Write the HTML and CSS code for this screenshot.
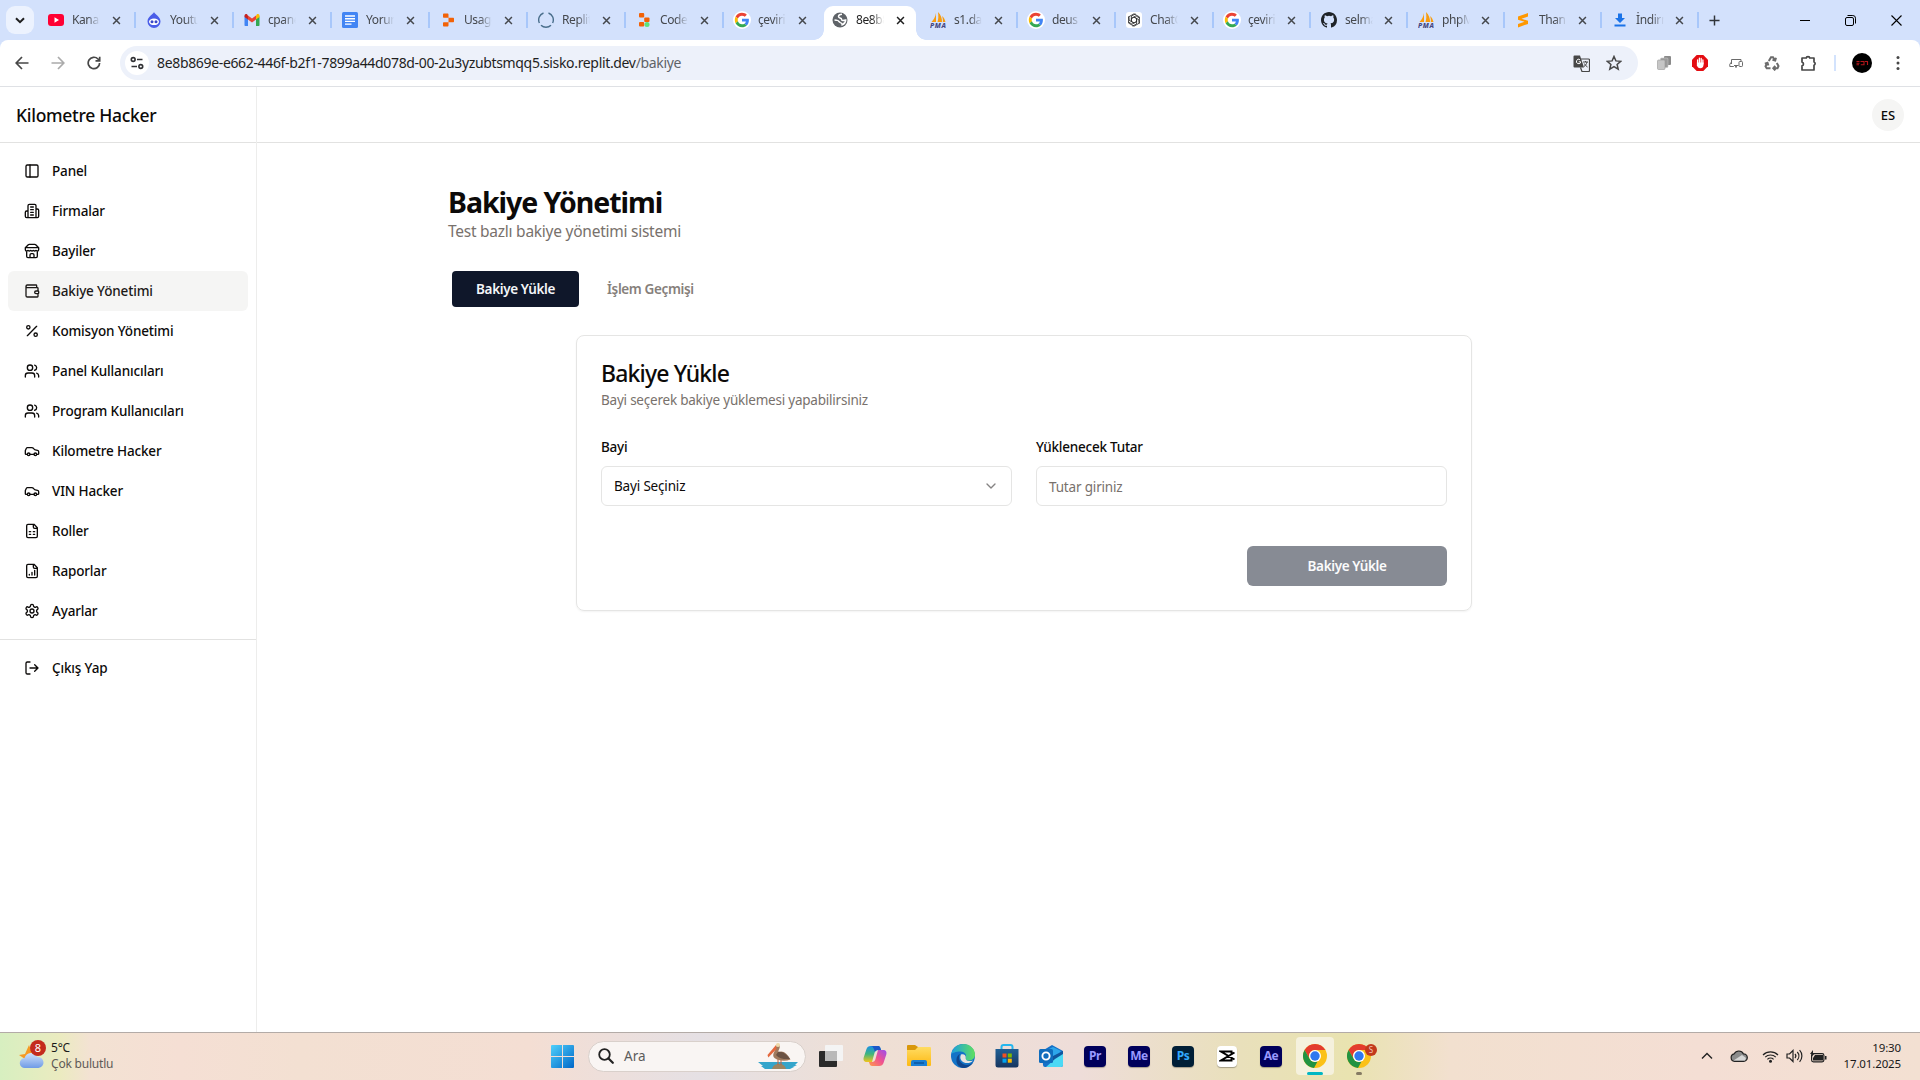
FILE: index.html
```html
<!DOCTYPE html>
<html lang="tr">
<head>
<meta charset="utf-8">
<title>Bakiye Yönetimi</title>
<link rel="stylesheet" href="styles.css">
</head>
<body>
<svg class="defs" width="0" height="0" aria-hidden="true">
  <defs>
    <linearGradient id="g-win" x1="0" y1="0" x2="1" y2="1"><stop offset="0" stop-color="#4fd0fb"/><stop offset="1" stop-color="#0067c8"/></linearGradient>
    <linearGradient id="g-edge" x1="0" y1="0" x2="1" y2="0"><stop offset="0" stop-color="#1d9fdf"/><stop offset="1" stop-color="#5fe05e"/></linearGradient>
    <linearGradient id="g-folder" x1="0" y1="0" x2="0" y2="1"><stop offset="0" stop-color="#ffdc63"/><stop offset="1" stop-color="#fdb913"/></linearGradient>
    <linearGradient id="g-cop1" x1="0" y1="0" x2="0" y2="1"><stop offset="0" stop-color="#1a8fe8"/><stop offset=".5" stop-color="#3fb57e"/><stop offset="1" stop-color="#f2c51b"/></linearGradient>
    <linearGradient id="g-cop2" x1="1" y1="0" x2="0" y2="1"><stop offset="0" stop-color="#9a4df0"/><stop offset=".5" stop-color="#f0528f"/><stop offset="1" stop-color="#ff9b4a"/></linearGradient>
    <linearGradient id="g-cloud" x1="0" y1="0" x2="0" y2="1"><stop offset="0" stop-color="#cfe2fb"/><stop offset="1" stop-color="#6f9be6"/></linearGradient>
    <linearGradient id="g-store" x1="0" y1="0" x2="0" y2="1"><stop offset="0" stop-color="#1f5f95"/><stop offset="1" stop-color="#17355f"/></linearGradient>
    <symbol id="google" viewBox="0 0 20 20">
      <circle cx="10" cy="10" r="10" fill="#fff"/>
      <g transform="translate(2 2) scale(.3333)">
        <path fill="#EA4335" d="M24 9.500c3.540 0 6.710 1.220 9.210 3.600l6.850-6.850C35.900 2.380 30.470 0 24 0 14.620 0 6.510 5.380 2.560 13.220l7.980 6.190C12.430 13.720 17.740 9.500 24 9.500z"/>
        <path fill="#4285F4" d="M46.980 24.550c0-1.570-.15-3.090-.38-4.550H24v9.020h12.940c-.58 2.960-2.260 5.480-4.780 7.180l7.730 6c4.510-4.180 7.090-10.360 7.090-17.650z"/>
        <path fill="#FBBC05" d="M10.530 28.590c-.48-1.450-.76-2.990-.76-4.590s.27-3.140.76-4.590l-7.980-6.190C.92 16.460 0 20.120 0 24c0 3.880.92 7.540 2.560 10.780l7.970-6.190z"/>
        <path fill="#34A853" d="M24 48c6.480 0 11.930-2.130 15.890-5.810l-7.730-6c-2.150 1.450-4.920 2.300-8.160 2.300-6.260 0-11.570-4.220-13.470-9.910l-7.980 6.190C6.510 42.620 14.620 48 24 48z"/>
      </g>
    </symbol>
    <symbol id="pma" viewBox="0 0 16 16">
      <path fill="#f89c0e" d="M6 1v9H1.500C3.500 8 5.500 5 6 1zM8 0c3 3 4 6 4 10H7.500C8.500 7 8.500 4 8 0zM12 4c2 1.500 3 4 3.500 6H12.800c.2-2 0-4-.8-6z"/>
      <text x="8" y="16" text-anchor="middle" font-size="6.800" font-weight="800" font-style="italic" fill="#444780" textLength="16">PMA</text>
    </symbol>
    <symbol id="x" viewBox="0 0 10 10"><path d="M1.200 1.200l7.600 7.600M8.800 1.200L1.200 8.800" fill="none" stroke="currentColor" stroke-width="1.700"/></symbol>
    <symbol id="users" viewBox="0 0 24 24"><path d="M16 21v-2a4 4 0 0 0-4-4H6a4 4 0 0 0-4 4v2"/><circle cx="9" cy="7" r="4"/><path d="M22 21v-2a4 4 0 0 0-3-3.870M16 3.130a4 4 0 0 1 0 7.750"/></symbol>
    <symbol id="car" viewBox="0 0 24 24"><path d="M19 17h2c.6 0 1-.4 1-1v-3c0-.9-.7-1.700-1.500-1.900C18.700 10.600 16 10 16 10s-1.300-1.400-2.200-2.300c-.5-.4-1.100-.7-1.800-.7H5c-.6 0-1.100.4-1.400.9l-1.400 2.900A3.700 3.700 0 0 0 2 12v4c0 .6.4 1 1 1h2"/><circle cx="7" cy="17" r="2"/><path d="M9 17h6"/><circle cx="17" cy="17" r="2"/></symbol>
    <symbol id="chrome" viewBox="0 0 24 24">
      <circle cx="12" cy="12" r="12" fill="#fbc116"/>
      <path fill="#e33b2e" d="M12 0a12 12 0 0 1 10.400 6H12a6 6 0 0 0-5.200 9L1.600 6A12 12 0 0 1 12 0z"/>
      <path fill="#229342" d="M1.600 6l5.200 9a6 6 0 0 0 5.200 3l2.500-.5L11 24A12 12 0 0 1 1.600 6z"/>
      <circle cx="12" cy="12" r="6" fill="#fff"/><circle cx="12" cy="12" r="4.700" fill="#3079ee"/>
    </symbol>
  </defs>
</svg>

<div class="screen">
  <header class="tabstrip">
    <span class="tab-search"><svg width="10" height="7" viewBox="0 0 10 7"><path d="M1 1.200l4 4 4-4" fill="none" stroke="#1f1f1f" stroke-width="2"/></svg></span>
    <div class="tab"><svg class="fav" viewBox="0 0 16 16"><rect y="2" width="16" height="12" rx="3" fill="#ff0033"/><path d="M6.500 5.300v5.400L11 8z" fill="#fff"/></svg><span class="tab-title">Kanal</span><svg class="close"><use href="#x"/></svg></div>
    <div class="tab"><svg class="fav" viewBox="0 0 16 16"><path d="M8 0c.8 2.500 6.500 4.500 6.500 9.500a6.500 6.500 0 0 1-13 0C1.500 4.500 7.200 2.500 8 0z" fill="#4a5de8"/><ellipse cx="8" cy="9.800" rx="5" ry="3.300" fill="#fff"/><circle cx="6" cy="9.800" r="1.500" fill="#3a48c8"/><circle cx="10" cy="9.800" r="1.500" fill="#3a48c8"/></svg><span class="tab-title">Youtu</span><svg class="close"><use href="#x"/></svg></div>
    <div class="tab"><svg class="fav" viewBox="0 0 16 16"><path d="M.5 4.200V13c0 .6.4 1 1 1H4V6.500z" fill="#4285f4"/><path d="M12 14h2.500c.6 0 1-.4 1-1V4.200L12 6.500z" fill="#34a853"/><path d="M12 3.500v4l3.500-2.600V3.800c0-1.500-1.700-2.200-2.700-1.400z" fill="#fbbc04"/><path d="M4 7.500v-4l4 3 4-3v4l-4 3z" fill="#ea4335"/><path d="M.5 3.800v1.100L4 7.500v-4l-.8-1.100C2.200 1.600.5 2.300.5 3.800z" fill="#c5221f"/></svg><span class="tab-title">cpane</span><svg class="close"><use href="#x"/></svg></div>
    <div class="tab"><svg class="fav" viewBox="0 0 16 16"><rect width="16" height="16" rx="1.500" fill="#4285f4"/><path d="M3 4h10M3 6.700h10M3 9.400h10M3 12.100h6.500" stroke="#fff" stroke-width="1.400"/></svg><span class="tab-title">Yorum</span><svg class="close"><use href="#x"/></svg></div>
    <div class="tab"><svg class="fav" viewBox="0 0 16 16"><path fill="#f26207" d="M3 2.500c0-.5.400-1 1-1h3.500c.6 0 1 .5 1 1v3.300H4c-.6 0-1-.4-1-1zM8.500 5.800H13c.6 0 1 .4 1 1v2.400c0 .6-.4 1-1 1H8.500zM3 11.200c0-.6.4-1 1-1h4.500v3.300c0 .5-.4 1-1 1H4c-.6 0-1-.5-1-1z"/></svg><span class="tab-title">Usage</span><svg class="close"><use href="#x"/></svg></div>
    <div class="tab"><svg class="fav" viewBox="0 0 16 16"><g fill="none" stroke="#4a6f8c" stroke-width="1.400"><path d="M10.500 1A7.300 7.300 0 0 1 14.600 11"/><path d="M13 13.200a7.300 7.300 0 0 1-10 0"/><path d="M1.400 11A7.300 7.300 0 0 1 5.500 1"/></g></svg><span class="tab-title">Replit</span><svg class="close"><use href="#x"/></svg></div>
    <div class="tab"><svg class="fav" viewBox="0 0 16 16"><rect x="3" y="1" width="5.200" height="4.600" rx="1" fill="#f26207"/><rect x="8.200" y="5.600" width="5.300" height="4.400" rx="1" fill="#f26207"/><rect x="3" y="10" width="5.200" height="4.600" rx="1" fill="#f26207"/><circle cx="11" cy="12.500" r="2.500" fill="#5ee37c"/></svg><span class="tab-title">Code</span><svg class="close"><use href="#x"/></svg></div>
    <div class="tab no-sep"><svg class="fav g"><use href="#google"/></svg><span class="tab-title">çeviri</span><svg class="close"><use href="#x"/></svg></div>
    <div class="tab active"><svg class="fav" viewBox="0 0 16 16"><circle cx="8" cy="8" r="7.500" fill="#5f6368"/><path d="M10 2.200c-1.500 0-3.500.8-3.500 2.300 0 1.500 1.500 1.200 2.500 1.800.9.600.2 1.600 1.200 2.100 1 .4 2-.2 3.500-.3-.2 2-1.500 3.800-3.500 4.800 0-1.500-.8-2-1.800-2.300-1.500-.5-1.500-1.800-3-2.200-1-.3-2-.4-2.900-.5" fill="none" stroke="#fff" stroke-width="1.500"/></svg><span class="tab-title">8e8b8</span><svg class="close"><use href="#x"/></svg></div>
    <div class="tab"><svg class="fav"><use href="#pma"/></svg><span class="tab-title">s1.da</span><svg class="close"><use href="#x"/></svg></div>
    <div class="tab"><svg class="fav g"><use href="#google"/></svg><span class="tab-title">deus</span><svg class="close"><use href="#x"/></svg></div>
    <div class="tab"><svg class="fav" viewBox="0 0 16 16"><rect width="16" height="16" rx="3" fill="#fff"/><g fill="none" stroke="#222" stroke-width=".8"><path d="M8 1.800l5.400 3.100v6.200L8 14.200l-5.400-3.100V4.900z" stroke-linejoin="round"/><path d="M8 5l2.600 1.500v3L8 11 5.400 9.500v-3zM5.400 9.500V4L9.500 1.900M5.400 6.500L10 3.800l3.600 2.300M8 5l4.800 2.700.4 4M10.600 6.500V12l-4.100 2.100M10.600 9.500L6 12.200 2.400 9.900M8 11L3.200 8.300l-.4-4"/></g></svg><span class="tab-title">ChatG</span><svg class="close"><use href="#x"/></svg></div>
    <div class="tab slim"><svg class="fav g"><use href="#google"/></svg><span class="tab-title">çeviri</span><svg class="close"><use href="#x"/></svg></div>
    <div class="tab slim"><svg class="fav" viewBox="0 0 16 16"><path fill="#1f2328" d="M8 0C3.580 0 0 3.580 0 8c0 3.540 2.290 6.530 5.470 7.590.4.070.55-.17.55-.38 0-.19-.01-.82-.01-1.490-2.010.37-2.530-.49-2.690-.94-.09-.23-.48-.94-.82-1.130-.28-.15-.68-.52-.01-.53.63-.01 1.080.58 1.230.82.72 1.210 1.870.87 2.330.66.07-.52.28-.87.51-1.070-1.780-.2-3.640-.89-3.640-3.950 0-.87.31-1.590.82-2.150-.08-.2-.36-1.020.08-2.120 0 0 .67-.21 2.200.82a7.640 7.640 0 0 1 4 0c1.530-1.040 2.200-.82 2.200-.82.44 1.100.16 1.920.08 2.120.51.56.82 1.270.82 2.150 0 3.070-1.870 3.750-3.650 3.950.29.25.54.73.54 1.480 0 1.070-.01 1.930-.01 2.200 0 .21.15.46.55.38A8 8 0 0 0 16 8c0-4.420-3.580-8-8-8z"/></svg><span class="tab-title">selma</span><svg class="close"><use href="#x"/></svg></div>
    <div class="tab slim"><svg class="fav"><use href="#pma"/></svg><span class="tab-title">phpM</span><svg class="close"><use href="#x"/></svg></div>
    <div class="tab slim"><svg class="fav" viewBox="0 0 16 16"><path fill="#ff9800" d="M3 4.500L13 1v3.600L6.500 6.800 13 8.800v3.100L3 15.500v-3.600l6.500-2.200L3 7.700z"/></svg><span class="tab-title">Than</span><svg class="close"><use href="#x"/></svg></div>
    <div class="tab slim"><svg class="fav" viewBox="0 0 16 16"><path fill="#1a73e8" d="M6 1.500h4V6h3l-5 5-5-5h3zM2.500 12.500h11v2h-11z"/></svg><span class="tab-title">İndirm</span><svg class="close"><use href="#x"/></svg></div>
    <svg class="new-tab" viewBox="0 0 12 12"><path d="M6 .5v11M.5 6h11" stroke="#30343a" stroke-width="1.600"/></svg>
    <div class="window-buttons">
      <svg width="10" height="10" viewBox="0 0 10 10"><path d="M0 5.500h10" stroke="#000"/></svg>
      <svg width="11" height="11" viewBox="0 0 11 11"><g fill="none" stroke="#000"><rect x=".5" y="2.500" width="8" height="8" rx="1.500"/><path d="M2.500.5h5.300a2.700 2.700 0 0 1 2.700 2.700v5.300"/></g></svg>
      <svg width="11" height="11" viewBox="0 0 11 11"><path d="M.5.5l10 10M10.500.5l-10 10" stroke="#000" stroke-width="1.100"/></svg>
    </div>
  </header>

  <div class="toolbar-wrap">
  <div class="toolbar">
    <div class="nav">
      <svg viewBox="0 0 14 14"><path d="M7 1L1.200 7 7 13M1.200 7H13.500" fill="none" stroke="#474747" stroke-width="1.700"/></svg>
      <svg viewBox="0 0 14 14"><path d="M7 1l5.800 6L7 13M12.800 7H.5" fill="none" stroke="#ababab" stroke-width="1.700"/></svg>
      <svg viewBox="0 0 14 14"><path d="M12.600 7A5.700 5.700 0 1 1 11 3l1.500 1.500M12.700.7v4.200H8.500" fill="none" stroke="#474747" stroke-width="1.700"/></svg>
    </div>
    <div class="omnibox">
      <span class="site-info"><svg width="14" height="14" viewBox="0 0 14 14"><g fill="none" stroke="#303134" stroke-width="1.600"><circle cx="3.200" cy="3.500" r="1.900"/><path d="M7 3.500h5.500M1.500 10.500H7"/><circle cx="10.800" cy="10.500" r="1.900"/></g></svg></span>
      <span class="url"><span class="host">8e8b869e-e662-446f-b2f1-7899a44d078d-00-2u3yzubtsmqq5.sisko.replit.dev</span><span class="path">/bakiye</span></span>
      <svg class="translate" width="17" height="17" viewBox="0 0 17 17"><path d="M1.500.5H7L11 12.500H1.500a1 1 0 0 1-1-1v-10a1 1 0 0 1 1-1z" fill="#474747"/><path d="M8 4h7.500a1 1 0 0 1 1 1v10.500a1 1 0 0 1-1 1H9l-1.500-4" fill="none" stroke="#474747" stroke-width="1.200"/><path d="M10 7h5M12.500 6v1M14 7c-.5 2-1.500 3.500-3 4.500M11.300 8.500c.7 1.500 1.700 2.500 3.200 3.500" fill="none" stroke="#474747"/><path d="M7 4.800a2.200 2.200 0 1 0 .8 2H5.700" fill="none" stroke="#fff" stroke-width="1"/></svg>
      <svg class="star" width="16" height="16" viewBox="0 0 16 16"><path d="M8 1.500l1.900 4.400 4.800.4-3.600 3.200 1.100 4.700L8 11.700l-4.200 2.500 1.100-4.700L1.300 6.300l4.800-.4z" fill="none" stroke="#474747" stroke-width="1.500"/></svg>
    </div>
    <div class="extensions">
      <svg viewBox="0 0 16 16"><rect x="8" y="1" width="7" height="9" rx="1" fill="#8a8a8a"/><rect x="4.500" y="3" width="7.500" height="9.500" rx="1" fill="#9c9c9c" stroke="#c4c4c4" stroke-width=".6"/><rect x="1.500" y="5" width="7.500" height="9.500" rx="1" fill="#c6c6c6" stroke="#999" stroke-width=".6"/></svg>
      <svg viewBox="0 0 16 16"><path d="M4.700 0h6.600L16 4.700v6.600L11.300 16H4.700L0 11.300V4.700z" fill="#e40d12"/><path d="M5.600 8.500V4.800M7.400 8V3.200M9.200 8V3.500M10.900 9V5" stroke="#fff" stroke-width="1.300" stroke-linecap="round"/><path d="M4.900 7.500h6.700l-.2 3c-.2 1.700-1.200 2.700-3 2.700-2 0-3-1-3.500-3z" fill="#fff"/></svg>
      <svg viewBox="0 0 16 16"><path d="M3.500 9V4.500h9.500V6M1.800 11.500V9.200L3.500 7M1.800 11.500h4M6 10.500h4.500" fill="none" stroke="#6a6a6a"/><rect x="11" y="6.500" width="3.500" height="5" rx=".8" fill="#fff" stroke="#6a6a6a"/><circle cx="8" cy="11.800" r="1" fill="#6a6a6a"/></svg>
      <svg viewBox="0 0 16 16"><g fill="none" stroke="#6c6c6c" stroke-width="2"><path d="M4.800 6L7 2.200h2L10.700 5M8.500 4.800l2.700.8.800-2.800"/><path d="M12.800 8l1.700 3-1 2.200H10M11.300 11l-2 2.200 2 2.200"/><path d="M6.500 13.200H2.700l-1.200-2L3.300 8.200M.8 8.600l2.700-.8.900 2.700"/></g></svg>
      <svg viewBox="0 0 16 16"><path d="M2 3h4.300a1.700 1.400 0 0 1 3.400 0H14v4a1.700 1.700 0 0 1 0 3.200V15H2v-4.200a1.900 1.900 0 0 0 0-3.700z" fill="none" stroke="#474747" stroke-width="1.700" stroke-linejoin="round"/></svg>
      <i class="bar"></i>
      <svg class="profile" viewBox="0 0 20 20"><circle cx="10" cy="10" r="10" fill="#000"/><path d="M4.500 8.500h3M4.500 10.200h3M4.500 11.800h2.500M8.500 8.500h3.500v3.300H8.800M13 8.500h2.500v3.500" stroke="#b4161b" stroke-width="1.100" fill="none"/></svg>
      <svg class="dots" viewBox="0 0 4 16"><circle cx="2" cy="2.500" r="1.500"/><circle cx="2" cy="8" r="1.500"/><circle cx="2" cy="13.500" r="1.500"/></svg>
    </div>
  </div>
  </div>

  <div class="app">
    <aside class="sidebar">
      <div class="brand">Kilometre Hacker</div>
      <nav class="menu">
        <a class="item"><svg viewBox="0 0 24 24"><rect x="3" y="3" width="18" height="18" rx="2"/><path d="M9 3v18"/></svg><span>Panel</span></a>
        <a class="item"><svg viewBox="0 0 24 24"><path d="M6 22V4a2 2 0 0 1 2-2h8a2 2 0 0 1 2 2v18ZM6 12H4a2 2 0 0 0-2 2v6a2 2 0 0 0 2 2h2M18 9h2a2 2 0 0 1 2 2v9a2 2 0 0 1-2 2h-2M10 6h4M10 10h4M10 14h4M10 18h4"/></svg><span>Firmalar</span></a>
        <a class="item"><svg viewBox="0 0 24 24"><path d="m2 7 4.410-4.410A2 2 0 0 1 7.830 2h8.340a2 2 0 0 1 1.420.59L22 7M4 12v8a2 2 0 0 0 2 2h12a2 2 0 0 0 2-2v-8M15 22v-4a2 2 0 0 0-2-2h-2a2 2 0 0 0-2 2v4M2 7h20M22 7v3a2 2 0 0 1-2 2a2.700 2.700 0 0 1-1.590-.63.7.7 0 0 0-.82 0A2.700 2.700 0 0 1 16 12a2.700 2.700 0 0 1-1.590-.63.7.7 0 0 0-.82 0A2.700 2.700 0 0 1 12 12a2.700 2.700 0 0 1-1.590-.63.7.7 0 0 0-.82 0A2.700 2.700 0 0 1 8 12a2.700 2.700 0 0 1-1.590-.63.7.7 0 0 0-.82 0A2.700 2.700 0 0 1 4 12a2 2 0 0 1-2-2V7"/></svg><span>Bayiler</span></a>
        <a class="item selected"><svg viewBox="0 0 24 24"><path d="M19 7V4a1 1 0 0 0-1-1H5a2 2 0 0 0 0 4h15a1 1 0 0 1 1 1v4h-3a2 2 0 0 0 0 4h3a1 1 0 0 0 1-1v-2a1 1 0 0 0-1-1M3 5v14a2 2 0 0 0 2 2h15a1 1 0 0 0 1-1v-4"/></svg><span>Bakiye Yönetimi</span></a>
        <a class="item"><svg viewBox="0 0 24 24"><path d="M19 5L5 19"/><circle cx="6.500" cy="6.500" r="2.500"/><circle cx="17.500" cy="17.500" r="2.500"/></svg><span>Komisyon Yönetimi</span></a>
        <a class="item"><svg><use href="#users"/></svg><span>Panel Kullanıcıları</span></a>
        <a class="item"><svg><use href="#users"/></svg><span>Program Kullanıcıları</span></a>
        <a class="item"><svg><use href="#car"/></svg><span>Kilometre Hacker</span></a>
        <a class="item"><svg><use href="#car"/></svg><span>VIN Hacker</span></a>
        <a class="item"><svg viewBox="0 0 24 24"><path d="M15 2H6a2 2 0 0 0-2 2v16a2 2 0 0 0 2 2h12a2 2 0 0 0 2-2V7ZM14 2v4a2 2 0 0 0 2 2h4M8 13h2M14 13h2M8 17h2M14 17h2"/></svg><span>Roller</span></a>
        <a class="item"><svg viewBox="0 0 24 24"><path d="M15 2H6a2 2 0 0 0-2 2v16a2 2 0 0 0 2 2h12a2 2 0 0 0 2-2V7ZM14 2v4a2 2 0 0 0 2 2h4M8 18v-1M12 18v-4M16 18v-7"/></svg><span>Raporlar</span></a>
        <a class="item"><svg viewBox="0 0 24 24"><path d="M12.220 2h-.44a2 2 0 0 0-2 2v.18a2 2 0 0 1-1 1.730l-.43.25a2 2 0 0 1-2 0l-.15-.08a2 2 0 0 0-2.730.73l-.22.38a2 2 0 0 0 .73 2.730l.15.1a2 2 0 0 1 1 1.720v.51a2 2 0 0 1-1 1.740l-.15.09a2 2 0 0 0-.73 2.730l.22.38a2 2 0 0 0 2.730.73l.15-.08a2 2 0 0 1 2 0l.43.25a2 2 0 0 1 1 1.730V20a2 2 0 0 0 2 2h.44a2 2 0 0 0 2-2v-.18a2 2 0 0 1 1-1.730l.43-.25a2 2 0 0 1 2 0l.15.08a2 2 0 0 0 2.730-.73l.22-.39a2 2 0 0 0-.73-2.730l-.15-.08a2 2 0 0 1-1-1.740v-.5a2 2 0 0 1 1-1.740l.15-.09a2 2 0 0 0 .73-2.730l-.22-.38a2 2 0 0 0-2.730-.73l-.15.08a2 2 0 0 1-2 0l-.43-.25a2 2 0 0 1-1-1.730V4a2 2 0 0 0-2-2z"/><circle cx="12" cy="12" r="3"/></svg><span>Ayarlar</span></a>
      </nav>
      <div class="menu logout">
        <a class="item"><svg viewBox="0 0 24 24"><path d="M9 21H5a2 2 0 0 1-2-2V5a2 2 0 0 1 2-2h4M16 17l5-5-5-5M21 12H9"/></svg><span>Çıkış Yap</span></a>
      </div>
    </aside>

    <div class="page">
      <div class="topbar"><span class="avatar">ES</span></div>
      <main class="content">
        <h1>Bakiye Yönetimi</h1>
        <p class="subtitle">Test bazlı bakiye yönetimi sistemi</p>
        <div class="tabs">
          <button class="tab-btn on">Bakiye Yükle</button>
          <button class="tab-btn">İşlem Geçmişi</button>
        </div>
        <section class="card">
          <h2>Bakiye Yükle</h2>
          <p class="hint">Bayi seçerek bakiye yüklemesi yapabilirsiniz</p>
          <div class="fields">
            <div class="field">
              <label>Bayi</label>
              <div class="control select"><span>Bayi Seçiniz</span><svg width="16" height="16" viewBox="0 0 24 24"><path d="m6 9 6 6 6-6" fill="none" stroke="#858383" stroke-width="2" stroke-linecap="round" stroke-linejoin="round"/></svg></div>
            </div>
            <div class="field">
              <label>Yüklenecek Tutar</label>
              <div class="control placeholder"><span>Tutar giriniz</span></div>
            </div>
          </div>
          <button class="submit">Bakiye Yükle</button>
        </section>
      </main>
    </div>
  </div>

  <footer class="taskbar">
    <div class="weather">
      <svg width="30" height="34" viewBox="0 0 30 34"><path d="M10 5l2 5 7 3-3 8-10-2-6-4 6-1z" fill="#f59a23"/><path d="M6 28a5 5 0 0 1-.5-10 7 7 0 0 1 13-1A5.500 5.500 0 0 1 19.500 28z" fill="url(#g-cloud)"/><circle cx="19" cy="8" r="8" fill="#c42b1c"/><text x="19" y="12" text-anchor="middle" font-size="11" fill="#fff">8</text></svg>
      <div class="weather-text"><span class="temp">5°C</span><span class="cond">Çok bulutlu</span></div>
    </div>
    <div class="dock">
      <div class="slot start"><svg width="23" height="23" viewBox="0 0 23 23"><path fill="url(#g-win)" d="M1 0h10v11H0V1a1 1 0 0 1 1-1zM12 0h10a1 1 0 0 1 1 1v10H12zM0 12h11v11H1a1 1 0 0 1-1-1zM12 12h11v10a1 1 0 0 1-1 1H12z"/></svg></div>
      <div class="search">
        <svg width="16" height="16" viewBox="0 0 16 16"><circle cx="6.500" cy="6.500" r="5.300" fill="none" stroke="#222" stroke-width="1.800"/><path d="M10.500 10.500l4.300 4.300" stroke="#222" stroke-width="2.200" stroke-linecap="round"/></svg>
        <span>Ara</span>
        <svg class="pelican" width="40" height="27" viewBox="0 0 40 27"><path d="M0 19h40l-3 3h2l-4 2h1l-4 2H7l-4-3h2z" fill="#35a5cb"/><path d="M14 26c1-4 4-5 7-5s6 1 7 5z" fill="#9c8461"/><path d="M20 15v7M23 16v6" stroke="#c8603a" stroke-width="1"/><path d="M19 1c3 0 3.500 3 2 5.500-.8 1.500-1 2.500 0 2.500 4-2 8.500 2 11.500 7.500-5 2-12 1.500-16-1.500-3-3 0-6 1-9z" fill="#a07a5e"/><path d="M20 9c5-1 9 3 12 7-6 .5-11-.5-14-4z" fill="#6b5344"/><path d="M18 2l-8.500 10 .8 2.500L18.500 6z" fill="#e4683e"/><circle cx="20" cy="2" r="2" fill="#efd9a8"/></svg>
      </div>
      <div class="slot"><svg width="24" height="22" viewBox="0 0 24 22"><rect y="6" width="18" height="16" rx="1" fill="#2a2a2a"/><rect x="6" width="18" height="16" rx="1" fill="#f4f4f4"/><path d="M6 6h12v10H6z" fill="#b9b9b9"/></svg></div>
      <div class="slot"><svg width="24" height="22" viewBox="0 0 24 22"><path d="M8 1h7c1 0 2 .7 2.300 1.700L18 5h-3c-2 0-3 1-3.500 3L9 17H4c-3 0-4-2-3.300-4.500L3.500 4C4.200 2 5.500 1 8 1z" fill="url(#g-cop1)"/><path d="M16 21H9c-1 0-2-.7-2.300-1.700L6 17h3c2 0 3-1 3.500-3L15 5h5c3 0 4 2 3.300 4.500L20.500 18c-.7 2-2 3-4.500 3z" fill="url(#g-cop2)"/><path d="M8 1h7c1 0 2 .7 2.300 1.700L18 5h-3c-2 0-2.500 1-3 2-1-3-2-6-4-6z" fill="#1c58c9"/></svg></div>
      <div class="slot"><svg width="24" height="22" viewBox="0 0 24 22"><path d="M0 1a1 1 0 0 1 1-1h7l3 2v4H0z" fill="#d9970b"/><path d="M0 5h8l3-3h12a1 1 0 0 1 1 1v17a1 1 0 0 1-1 1H1a1 1 0 0 1-1-1z" fill="url(#g-folder)"/><path d="M4 21v-4a2 2 0 0 1 2-2h12a2 2 0 0 1 2 2v4z" fill="#1a7fd4"/><path d="M7 18h10" stroke="#0b559f" stroke-width="1.500"/></svg></div>
      <div class="slot"><svg width="24" height="24" viewBox="0 0 24 24"><circle cx="12" cy="12" r="12" fill="#1373c7"/><path d="M.3 10C1.500 4 6.500 0 12.500 0 19 0 24 5 24 10.500c0 4-3 6-6.500 6-3 0-4-1.200-3-2.500 1.500-2.500 0-6.500-5-6.500C5 7.500 1 9 .3 10z" fill="url(#g-edge)"/><path d="M9 10c-2 3-1 8 3 10 3.500 1.700 7.500 1 10-1.500C20 22 16 24 12 24 7 23 5 19 5.500 15 5.800 12.500 7 11 9 10z" fill="#10458d"/><path d="M10 10.500c3-1 5 .8 4.700 3-.7 2.500 1.800 4.500 7.300 3-2 2.500-6 3.300-9 2-3.500-1.500-4.500-5-3-8z" fill="#e8e3df"/></svg></div>
      <div class="slot"><svg width="24" height="24" viewBox="0 0 24 24"><path d="M6.500 6V3a2 2 0 0 1 2-2h7a2 2 0 0 1 2 2v3" fill="none" stroke="#25b6ee" stroke-width="2"/><path d="M.5 5h23v16a2.500 2.500 0 0 1-2.500 2.500H3A2.500 2.500 0 0 1 .5 21z" fill="url(#g-store)"/><path d="M7.500 9.500h4v4h-4z" fill="#f25022"/><path d="M12.800 9.500h4v4h-4z" fill="#7fba00"/><path d="M7.500 14.700h4v4h-4z" fill="#00a4ef"/><path d="M12.800 14.700h4v4h-4z" fill="#ffb900"/></svg></div>
      <div class="slot"><svg width="24" height="22" viewBox="0 0 24 22"><path d="M3 6l10-6 11 6v14a2 2 0 0 1-2 2H6a2 2 0 0 1-2-2z" fill="#1470c8"/><path d="M6 6l8-4 8 4-7 9z" fill="#2da6ea"/><path d="M14 11l10-5v4l-12 9z" fill="#10559c"/><path d="M24 9v11a2 2 0 0 1-2 2H7l9-8z" fill="#4bd9f5"/><rect y="4" width="14" height="14" rx="1.500" fill="#0f6cbd"/><circle cx="7" cy="11" r="3.600" fill="none" stroke="#fff" stroke-width="1.900"/></svg></div>
      <div class="slot"><span class="adobe navy">Pr</span></div>
      <div class="slot"><span class="adobe navy">Me</span></div>
      <div class="slot"><span class="adobe ps">Ps</span></div>
      <div class="slot"><span class="adobe cap"><svg width="16" height="12" viewBox="0 0 16 12"><path d="M15.500 2.500L2 10.500h10.500v-2M15.500 9.500L2 1.500h10.500v2" fill="none" stroke="#000" stroke-width="2"/></svg></span></div>
      <div class="slot"><span class="adobe navy">Ae</span></div>
      <div class="slot current"><svg width="24" height="24"><use href="#chrome"/></svg></div>
      <div class="slot running"><svg width="24" height="24"><use href="#chrome"/></svg><span class="badge">S</span></div>
    </div>
    <div class="tray">
      <svg class="chevron" width="12" height="8" viewBox="0 0 12 8"><path d="M1 6.500l5-5 5 5" fill="none" stroke="#222" stroke-width="1.400"/></svg>
      <svg class="cloud" width="18" height="12" viewBox="0 0 18 12"><path d="M4.500 11.300a3.800 3.800 0 0 1-.3-7.500A5.200 5.200 0 0 1 13.500 3.900a3.700 3.700 0 0 1 .2 7.400z" fill="#8c8c8c" stroke="#222" stroke-width="1.200"/><path d="M3.500 10.500L12 5l4 3-1 2.500z" fill="#d6d6d6"/></svg>
      <svg width="17" height="13" viewBox="0 0 17 13"><g fill="none" stroke="#222" stroke-width="1.200"><path d="M1 5a10.500 10.500 0 0 1 15 0M3.200 7.200a7.500 7.500 0 0 1 10.600 0M5.400 9.400a4.400 4.400 0 0 1 6.200 0"/></g><circle cx="8.500" cy="11.300" r="1.500" fill="#222"/></svg>
      <svg width="17" height="14" viewBox="0 0 17 14"><g fill="none" stroke="#222" stroke-width="1.200"><path d="M1 5h2.500L7 1.500v11L3.500 9H1z"/><path d="M9 5a3 3 0 0 1 0 4M11.300 3a6 6 0 0 1 0 8M13.600 1.200a8.500 8.500 0 0 1 0 11.600"/></g></svg>
      <svg width="17" height="13" viewBox="0 0 17 13"><rect x="1.600" y="3.600" width="12.300" height="8.300" rx="1.800" fill="none" stroke="#222" stroke-width="1.200"/><path d="M5 5h8v5.500H3V8z" fill="#222"/><path d="M15 6h1.500v3.500H15zM3 0v3h2L1.500 7V4H0z" fill="#222"/></svg>
      <div class="clock"><span>19:30</span><span>17.01.2025</span></div>
    </div>
  </footer>
</div>
</body>
</html>
```
FILE: styles.css
```css
* { box-sizing: border-box; margin: 0; padding: 0; }

body {
  font-family: "Noto Sans", "Open Sans", sans-serif;
  color: #0c0a09;
  background: #fff;
}

svg { display: block; flex: none; }
.defs { position: absolute; }

.screen {
  display: flex;
  flex-direction: column;
  width: 1920px;
  height: 1080px;
  overflow: hidden;
}

/* browser tab strip */
.tabstrip {
  display: flex;
  align-items: center;
  height: 40px;
  padding-left: 6px;
  background: #d3e1fc;
}
.tab-search {
  display: grid;
  place-items: center;
  width: 28px;
  height: 28px;
  margin-right: 3px;
  border-radius: 9px;
  background: #ecf2fe;
}
.tab {
  display: flex;
  align-items: center;
  flex: none;
  position: relative;
  width: 98px;
  height: 40px;
  padding-left: 11px;
  color: #45484d;
}
.tab.slim { width: 97px; }
.tab::after {
  content: "";
  position: absolute;
  right: -1px;
  top: 12px;
  width: 2px;
  height: 16px;
  background: #a8c7fa;
}
.tab.no-sep::after { display: none; }
.tab .fav { width: 16px; height: 16px; }
.tab-title {
  width: 28px;
  margin-left: 8px;
  overflow: hidden;
  white-space: nowrap;
  font-size: 12px;
  line-height: 18px;
  letter-spacing: -.4px;
  -webkit-mask-image: linear-gradient(90deg, #000 55%, transparent);
  mask-image: linear-gradient(90deg, #000 55%, transparent);
}
.tab .close { width: 9px; height: 9px; margin-left: 11.500px; }
.tab.slim .close { margin-left: 10.500px; }
.tab.active {
  height: 34px;
  align-self: flex-end;
  width: 92px;
  margin: 0 3px;
  padding: 0 0 6px 8px;
  border-radius: 9px 9px 0 0;
  background: #fff;
  color: #1f1f1f;
}
.tab.active::before,
.tab.active::after {
  content: "";
  position: absolute;
  top: auto;
  bottom: 0;
  width: 10px;
  height: 10px;
  background: radial-gradient(circle at 0 0, transparent 9.500px, #fff 10px);
}
.tab.active::before { left: -10px; }
.tab.active::after { right: -10px; transform: scaleX(-1); }
.tab .fav.g { width: 18px; height: 18px; margin: 0 -1px; }
.new-tab { width: 11px; height: 11px; margin-left: 11px; }
.window-buttons {
  display: flex;
  align-items: center;
  gap: 35px;
  margin-left: auto;
  margin-right: 18px;
}

/* browser toolbar */
.toolbar-wrap { background: #d3e1fc; }
.toolbar {
  display: flex;
  align-items: center;
  height: 47px;
  padding: 0 20px 0 15px;
  border-bottom: 1px solid #dfe1e5;
  border-radius: 8px 8px 0 0;
  background: #fff;
}
.nav { display: flex; gap: 22px; }
.nav svg { width: 14px; height: 14px; }
.omnibox {
  display: flex;
  align-items: center;
  width: 1518px;
  height: 34px;
  margin-left: 19px;
  padding: 0 16px 0 5px;
  border-radius: 17px;
  background: #edf1fa;
}
.site-info {
  display: grid;
  place-items: center;
  width: 24px;
  height: 24px;
  border-radius: 50%;
  background: #fff;
}
.url {
  margin-left: 8px;
  font-size: 14px;
  line-height: 20px;
  letter-spacing: -.34px;
  white-space: nowrap;
}
.host { color: #1f1f1f; }
.path { color: #5f6368; }
.translate { margin-left: auto; }
.star { margin-left: 16px; }
.extensions {
  display: flex;
  align-items: center;
  gap: 20px;
  margin-left: auto;
}
.extensions svg { width: 16px; height: 16px; }
.extensions .bar { width: 2px; height: 16px; margin: 0 -4px 0 -2px; background: #d3e3fd; }
.extensions .profile { width: 20px; height: 20px; }
.extensions .dots { width: 4px; margin-left: 4px; fill: #474747; }

/* application */
.app { display: flex; height: 945px; }
.sidebar { width: 257px; border-right: 1px solid #ededec; }
.brand {
  display: flex;
  align-items: center;
  height: 56px;
  padding-left: 16px;
  border-bottom: 1px solid #e2e2e1;
  font-size: 17.500px;
  font-weight: 500;
  letter-spacing: -.29px;
}
.menu { padding: 8px; }
.logout { border-top: 1px solid #e2e2e1; }
.item {
  display: flex;
  align-items: center;
  gap: 12px;
  height: 40px;
  padding-left: 16px;
  border-radius: 6px;
  font-size: 13.500px;
  font-weight: 500;
  letter-spacing: -.15px;
  white-space: nowrap;
}
.item span { padding-bottom: 1px; }
.item svg {
  width: 16px;
  height: 16px;
  fill: none;
  stroke: currentColor;
  stroke-width: 2;
  stroke-linecap: round;
  stroke-linejoin: round;
}
.item.selected { background: #f5f5f4; color: #1c1917; }
.page { flex: 1; }
.topbar {
  display: flex;
  align-items: center;
  justify-content: flex-end;
  height: 56px;
  padding-right: 16px;
  border-bottom: 1px solid #e2e2e1;
}
.avatar {
  display: grid;
  place-items: center;
  width: 32px;
  height: 32px;
  border-radius: 50%;
  background: #f5f5f4;
  font-size: 13px;
  font-weight: 500;
}
.content { padding: 41px 0 0 191px; }
h1 { font-size: 28.500px; line-height: 36px; font-weight: 700; letter-spacing: -1.050px; }
.subtitle { margin-top: -1px; font-size: 15.500px; line-height: 24px; letter-spacing: -.25px; color: #78716c; }
.tabs { display: flex; padding: 28px 4px 0; }
.tab-btn,
.submit {
  border: 0;
  font: 600 13.500px/20px "Noto Sans", "Open Sans", sans-serif;
  letter-spacing: -.38px;
  white-space: nowrap;
}
.tab-btn {
  height: 36px;
  padding: 0 24px;
  border-radius: 4px;
  background: none;
  color: #86807b;
}
.tab-btn.on { width: 127px; margin-right: 4px; background: #0f172a; color: #f3f5f8; }
.card {
  display: flex;
  flex-direction: column;
  width: 896px;
  height: 276px;
  margin: 28px 0 0 128px;
  padding: 24px;
  border: 1px solid #e5e5e4;
  border-radius: 8px;
  box-shadow: 0 1px 2px rgba(0, 0, 0, .05);
}
h2 { margin-bottom: 4px; font-size: 23px; line-height: 26px; font-weight: 500; letter-spacing: -.83px; }
.hint { font-size: 13.500px; line-height: 20px; letter-spacing: -.22px; color: #78716c; }
.fields { display: grid; grid-template-columns: 1fr 1fr; gap: 24px; margin-top: 27px; }
label { display: block; font-size: 13.500px; line-height: 20px; font-weight: 500; letter-spacing: -.23px; }
.control {
  display: flex;
  align-items: center;
  justify-content: space-between;
  height: 40px;
  margin-top: 9px;
  padding: 0 12px;
  border: 1px solid #e5e5e4;
  border-radius: 6px;
  font-size: 13.500px;
  letter-spacing: -.17px;
}
.placeholder { padding-top: 1px; color: #78716c; }
.submit {
  align-self: flex-end;
  width: 200px;
  height: 40px;
  margin-top: 40px;
  border-radius: 6px;
  background: #878b94;
  color: #fbfbfc;
}

/* desktop taskbar */
.taskbar {
  display: grid;
  grid-template-columns: 1fr auto 1fr;
  align-items: center;
  height: 48px;
  border-top: 1px solid #b3aba7;
  background: linear-gradient(90deg, #d7efc0 0, #ebebc0 60px, #f3e2d3 90px, #f5dfd4 180px, #f3e0d2 300px, #f4ded3 530px, #e5e0e4 700px, #efdfd4 880px, #eeddd9 1080px, #e9e0bb 1240px, #e9e3b0 1350px, #f2e0cf 1450px, #f4ded4 1700px, #f3e0d2 1920px);
}
.weather { display: flex; align-items: center; gap: 2px; padding-left: 19px; }
.weather-text {
  display: flex;
  flex-direction: column;
  padding-bottom: 1px;
  font-size: 12px;
  line-height: 16px;
  letter-spacing: -.2px;
}
.temp { color: #1a1a1a; }
.cond { color: #605a56; }
.dock { display: flex; align-items: center; }
.slot {
  display: flex;
  flex-direction: column;
  align-items: center;
  justify-content: center;
  position: relative;
  width: 44px;
  height: 47px;
  padding-bottom: 1px;
}
.slot.start { width: 48px; padding-right: 1px; }
.search {
  display: flex;
  align-items: center;
  width: 218px;
  height: 31px;
  margin: 0 3px 1px 1px;
  padding: 0 7px 0 9px;
  border: 1px solid #d9d0cb;
  border-radius: 16px;
  background: #f9f5f3;
  color: #5c5c5c;
  font-size: 13.500px;
}
.search span { margin-left: 10px; }
.pelican { margin-left: auto; }
.adobe {
  display: grid;
  place-items: center;
  width: 22px;
  height: 21px;
  border-radius: 4px;
  font-size: 12px;
  line-height: 20px;
  font-weight: 700;
  letter-spacing: -.5px;
  box-shadow: 0 1px 1px rgba(0, 0, 0, .3);
}
.navy { background: #00005b; color: #9999ff; }
.ps { background: #001e36; color: #31a8ff; }
.cap { width: 20px; background: #fff; }
.current::before {
  content: "";
  position: absolute;
  inset: 4px 3px 5px;
  border-radius: 4px;
  background: #f5f1dd;
}
.current svg { position: relative; }
.current::after,
.running::after {
  content: "";
  position: absolute;
  bottom: 5px;
  width: 16px;
  height: 3px;
  border-radius: 2px;
  background: #00b7c3;
}
.running::after { width: 6px; background: #857b63; }
.badge {
  position: absolute;
  right: 4px;
  top: 11px;
  width: 12px;
  height: 12px;
  border-radius: 50%;
  background: #c2391b;
  color: #f2c3b7;
  font-size: 8px;
  line-height: 12px;
  text-align: center;
}
.tray {
  display: flex;
  align-items: center;
  justify-content: flex-end;
  gap: 7px;
  padding: 0 19px 1px 0;
}
.tray .chevron { margin-right: 10px; }
.tray .cloud { margin-right: 7px; }
.clock {
  display: flex;
  flex-direction: column;
  align-items: flex-end;
  width: 67px;
  font-size: 11.500px;
  line-height: 16px;
  letter-spacing: -.13px;
  color: #1a1a1a;
}
```
